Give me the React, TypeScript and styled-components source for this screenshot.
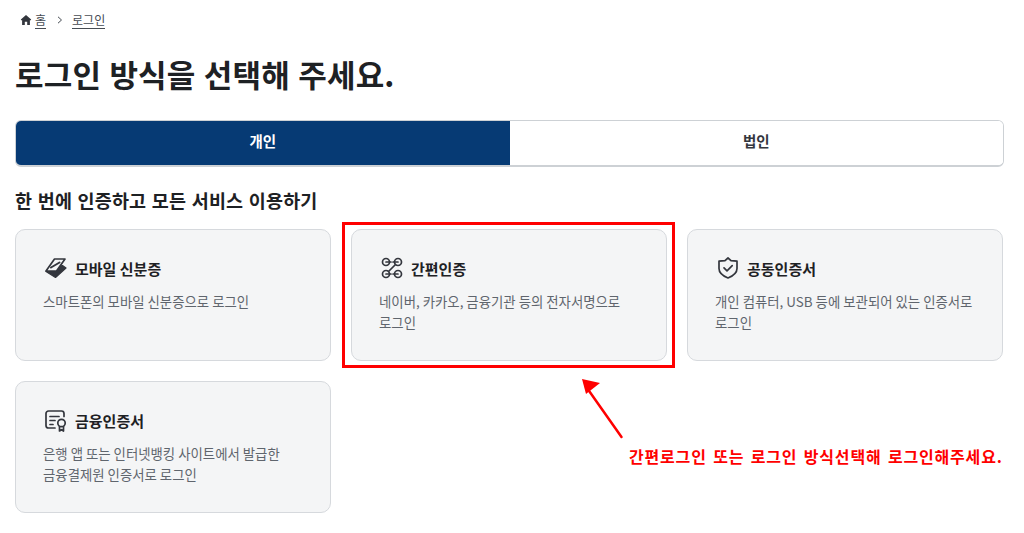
import React, { useState } from 'react';
import styled, { createGlobalStyle } from 'styled-components';

const GlobalStyle = createGlobalStyle`
  html, body {
    margin: 0;
    padding: 0;
    background: #fff;
    overflow: hidden;
  }
  body {
    font-family: "Noto Sans CJK KR", "Noto Sans", sans-serif;
    color: #1e2124;
  }
  * { box-sizing: border-box; }
`;

const Page = styled.main`
  position: relative;
  width: 1024px;
  height: 533px;
  padding: 10px 20px 0 15px;
`;

const Breadcrumb = styled.nav`
  display: flex;
  align-items: center;
  height: 20px;
  padding-left: 5px;
  font-size: 12px;
  color: #464c53;
`;

const HomeIcon = styled.svg`
  width: 12px;
  height: 12px;
  margin-right: 3px;
`;

const CrumbLink = styled.a`
  line-height: 16px;
  border-bottom: 1px solid #464c53;
`;

const Chevron = styled.svg`
  width: 8px;
  height: 8px;
  margin: 0 8px 0 10px;
`;

const Title = styled.h1`
  margin: 20px 0 0;
  font-size: 31px;
  line-height: 48px;
  font-weight: 700;
  letter-spacing: 0.2px;
  word-spacing: 1px;
  color: #1e2124;
`;

const Tabs = styled.div`
  display: grid;
  grid-template-columns: 1fr 1fr;
  height: 47px;
  margin-top: 22px;
  border: 1px solid #cdd1d5;
  border-bottom-width: 2px;
  border-radius: 6px;
  overflow: hidden;
`;

const Tab = styled.button<{ $active?: boolean }>`
  border: 0;
  padding: 0 0 5px;
  font-family: inherit;
  font-size: 14.5px;
  font-weight: 700;
  background: ${({ $active }) => ($active ? '#063a74' : '#fff')};
  color: ${({ $active }) => ($active ? '#fff' : '#33363d')};
`;

const SectionTitle = styled.h2`
  margin: 18px 0 0;
  font-size: 18.5px;
  line-height: 30px;
  font-weight: 700;
  letter-spacing: 0.15px;
  word-spacing: 1.2px;
  color: #1e2124;
`;

const CardGrid = styled.div`
  display: grid;
  grid-template-columns: repeat(3, 316px);
  grid-auto-rows: 132px;
  gap: 20px;
  margin-top: 14px;
`;

const Card = styled.a`
  display: block;
  padding: 23px 20px 23px 28px;
  background: #f4f5f6;
  border: 1px solid #d6d9dd;
  border-bottom-width: 1.5px;
  border-radius: 10px;
`;

const CardHead = styled.div`
  display: flex;
  align-items: center;
  gap: 7px;
  height: 30px;
`;

const CardTitle = styled.strong`
  font-size: 15px;
  font-weight: 700;
  color: #1e2124;
`;

const CardText = styled.p`
  margin: 8px 0 0 -1px;
  font-size: 13.4px;
  line-height: 21px;
  word-break: keep-all;
  color: #5f656d;
`;

const Icon = styled.svg`
  flex: none;
  width: 24px;
  height: 24px;
  fill: none;
  stroke: #33363d;
  stroke-width: 1.7;
  stroke-linecap: round;
  stroke-linejoin: round;
`;

// annotation layered over the captured page
const Highlight = styled.div`
  position: absolute;
  left: 342px;
  top: 222px;
  width: 333px;
  height: 146px;
  border: 3px solid #f00;
`;

const Arrow = styled.svg`
  position: absolute;
  left: 575px;
  top: 372px;
  width: 56px;
  height: 72px;
`;

const Note = styled.p`
  position: absolute;
  left: 629px;
  top: 444px;
  margin: 0;
  font-size: 16px;
  line-height: 24px;
  font-weight: 700;
  letter-spacing: 0.82px;
  word-spacing: 2px;
  white-space: nowrap;
  color: #f00;
`;

const IdIcon = () => (
  <Icon viewBox="0 0 24 24">
    <path d="M2 15.500l9.500 6 10.500-9.500-3.500-2.500L6 12z" fill="#33363d" strokeWidth="1.2" />
    <path d="M10.500 3H21l-8.500 12H2z" fill="#f4f5f6" strokeWidth="1.7" />
    <path d="M7 11.500l8.500-5" strokeWidth="2" />
  </Icon>
);

const LinkIcon = () => (
  <Icon viewBox="0 0 24 24">
    <circle cx="6" cy="6" r="3.500" />
    <circle cx="18" cy="6" r="3.500" />
    <circle cx="6" cy="18" r="3.500" />
    <circle cx="18" cy="18" r="3.500" />
    <path d="M6 6h5M18 6h-5M6 18h5M18 18h-5M15.500 8.500L8.500 15.500" />
  </Icon>
);

const ShieldIcon = () => (
  <Icon viewBox="0 0 24 24">
    <path d="M12 2l3 2.600 6 .6v7.300c0 4.400-4 7.500-9 9.500-5-2-9-5.100-9-9.500V5.200l6-.6z" />
    <path d="M8 11.800l3 3 5.200-5.200" />
  </Icon>
);

const CertIcon = () => (
  <Icon viewBox="0 0 24 24">
    <path d="M11 20H4.500A2.500 2.500 0 0 1 2 17.500v-12A2.500 2.500 0 0 1 4.500 3h13A2.500 2.500 0 0 1 20 5.500v3" />
    <path d="M6 8.500h9M6 12.500h5M6 16.500h3" />
    <circle cx="17.500" cy="15" r="3.700" />
    <path d="M15.500 18.500V23l2-1.300 2 1.300v-4.500" />
  </Icon>
);

const methods = [
  { id: 'mobile', title: '모바일 신분증', text: '스마트폰의 모바일 신분증으로 로그인', icon: <IdIcon /> },
  { id: 'simple', title: '간편인증', text: '네이버, 카카오, 금융기관 등의 전자서명으로 로그인', icon: <LinkIcon /> },
  { id: 'joint', title: '공동인증서', text: '개인 컴퓨터, USB 등에 보관되어 있는 인증서로 로그인', icon: <ShieldIcon /> },
  { id: 'finance', title: '금융인증서', text: '은행 앱 또는 인터넷뱅킹 사이트에서 발급한 금융결제원 인증서로 로그인', icon: <CertIcon /> },
];

const App: React.FC = () => {
  const [tab, setTab] = useState('personal');

  return (
    <Page>
      <GlobalStyle />
      <Breadcrumb>
        <HomeIcon viewBox="0 0 12 12">
          <path d="M6 1L.8 5.600l.7.800.6-.500V11h2.700V7.800h2.400V11h2.700V5.900l.6.500.7-.800z" fill="#33363d" />
        </HomeIcon>
        <CrumbLink>홈</CrumbLink>
        <Chevron viewBox="0 0 8 8">
          <path d="M2 .8L5.500 4 2 7.200" fill="none" stroke="#464c53" strokeWidth="1" />
        </Chevron>
        <CrumbLink>로그인</CrumbLink>
      </Breadcrumb>

      <Title>로그인 방식을 선택해 주세요.</Title>

      <Tabs>
        <Tab $active={tab === 'personal'} onClick={() => setTab('personal')}>개인</Tab>
        <Tab $active={tab === 'corp'} onClick={() => setTab('corp')}>법인</Tab>
      </Tabs>

      <SectionTitle>한 번에 인증하고 모든 서비스 이용하기</SectionTitle>

      <CardGrid>
        {methods.map((m) => (
          <Card key={m.id}>
            <CardHead>
              {m.icon}
              <CardTitle>{m.title}</CardTitle>
            </CardHead>
            <CardText>{m.text}</CardText>
          </Card>
        ))}
      </CardGrid>

      <Highlight />
      <Arrow viewBox="0 0 56 72">
        <path d="M46.500 65L12 16" stroke="#f00" strokeWidth="2.500" strokeLinecap="round" />
        <path d="M7 7l18 4-14 11z" fill="#f00" />
      </Arrow>
      <Note>간편로그인 또는 로그인 방식선택해 로그인해주세요.</Note>
    </Page>
  );
};

export default App;
